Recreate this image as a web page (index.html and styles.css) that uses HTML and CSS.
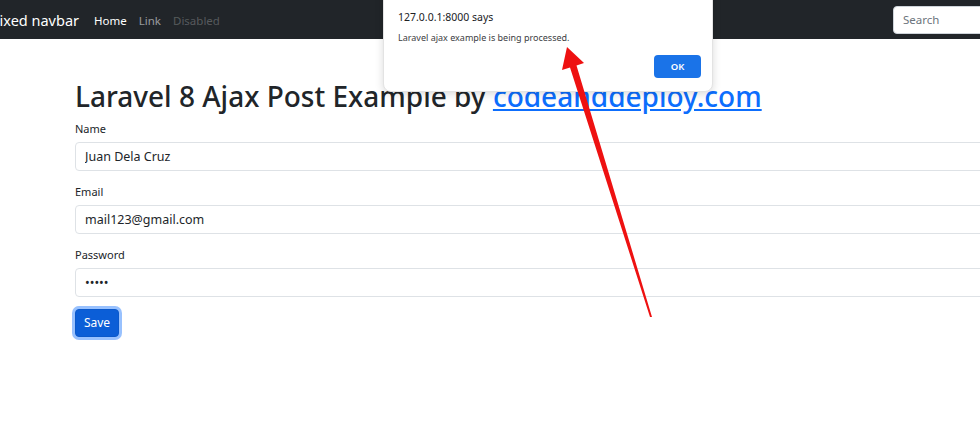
FILE: index.html
```html
<!DOCTYPE html>
<html>
<head>
    <title>Laravel 8 Ajax Post Example</title>
    <link rel="stylesheet" href="styles.css">
</head>
<body>
    <nav class="navbar">
        <a class="brand" href="#">Fixed navbar</a>
        <ul class="nav-links">
            <li><a class="active" href="#">Home</a></li>
            <li><a href="#">Link</a></li>
            <li><a class="disabled">Disabled</a></li>
        </ul>
        <input class="search" type="search" placeholder="Search">
    </nav>

    <div class="container">
        <h1>Laravel 8 Ajax Post Example by <a href="#">codeanddeploy.com</a></h1>
        <form id="form">
            <div class="field">
                <label for="name">Name</label>
                <input type="text" id="name" value="Juan Dela Cruz">
            </div>
            <div class="field">
                <label for="email">Email</label>
                <input type="text" id="email" value="mail123@gmail.com">
            </div>
            <div class="field">
                <label for="password">Password</label>
                <input type="password" id="password" value="12345">
            </div>
            <button type="button" class="btn-save">Save</button>
        </form>
    </div>

    <!-- alert box del navegador -->
    <div class="alert-box">
        <div class="alert-title">127.0.0.1:8000 says</div>
        <div class="alert-msg">Laravel ajax example is being processed.</div>
        <div class="alert-actions">
            <button type="button" class="btn-ok">OK</button>
        </div>
    </div>

    <svg class="arrow" width="980" height="422" viewBox="0 0 980 422">
        <polygon points="567,47 584,63 576.5,65.5 652,317 650,317 570,67.5 562,70" fill="#ee1111"/>
    </svg>
</body>
</html>
```

FILE: styles.css
```css
body {
    margin: 0;
    font-family: "Noto Sans", "Open Sans", sans-serif;
    color: #212529;
    background-color: #fff;
    width: 980px;
    height: 422px;
    overflow: hidden;
    position: relative;
}

.navbar {
    height: 39px;
    background-color: #212529;
    display: flex;
    align-items: center;
}

.brand {
    color: #fff;
    text-decoration: none;
    font-size: 14.5px;
    margin-left: -8px;
    margin-right: 15px;
}

.nav-links {
    display: flex;
    gap: 12px;
    list-style: none;
    margin: -2px 0 0 0;
    padding: 0;
}

.nav-links a {
    font-size: 11.5px;
    text-decoration: none;
    color: rgba(255, 255, 255, 0.55);
}

.nav-links a.active {
    color: #fff;
}

.nav-links a.disabled {
    color: rgba(255, 255, 255, 0.25);
}

.search {
    margin-left: auto;
    margin-right: -30px;
    width: 117px;
    height: 28px;
    box-sizing: border-box;
    border: 1px solid #ced4da;
    border-radius: 4px;
    padding: 0 9px;
    font-family: inherit;
    font-size: 11.5px;
}

.search::placeholder {
    color: #6c757d;
}

.container {
    padding-left: 75px;
}

h1 {
    font-size: 28px;
    font-weight: 500;
    margin: 41px 0 7px 0;
    line-height: 1.2;
    white-space: nowrap;
}

h1 a {
    color: #0d6efd;
}

.field {
    margin-bottom: 13px;
}

.field label {
    display: block;
    font-size: 11px;
    margin-bottom: 6px;
}

.field input {
    display: block;
    width: 930px;
    height: 29px;
    box-sizing: border-box;
    border: 1px solid #dee2e6;
    border-radius: 4px;
    padding: 0 9px;
    font-family: inherit;
    font-size: 12.5px;
    color: #212529;
}

.btn-save {
    display: block;
    margin-top: -1px;
    background-color: #0b5ed7;
    color: #fff;
    border: 1px solid #0a58ca;
    border-radius: 4px;
    height: 28px;
    width: 44px;
    padding: 0;
    font-family: inherit;
    font-size: 12px;
    box-shadow: 0 0 0 3px rgba(49, 132, 253, 0.5);
}

.alert-box {
    position: absolute;
    left: 383px;
    top: -10px;
    width: 330px;
    height: 102px;
    box-sizing: border-box;
    background-color: #fff;
    border: 1px solid #e3e3e3;
    border-radius: 8px;
    box-shadow: 0 2px 8px rgba(0, 0, 0, 0.15);
    padding: 17px 11px 0 14px;
}

.alert-title {
    font-size: 10.5px;
    color: #202124;
    line-height: 18px;
}

.alert-msg {
    font-size: 9px;
    color: #3c4043;
    margin-top: 5px;
}

.alert-actions {
    display: flex;
    justify-content: flex-end;
    margin-top: 11px;
}

.btn-ok {
    background-color: #1a73e8;
    color: #fff;
    border: none;
    border-radius: 4px;
    width: 47px;
    height: 23px;
    font-family: inherit;
    font-size: 9.5px;
    font-weight: 600;
}

.arrow {
    position: absolute;
    left: 0;
    top: 0;
    pointer-events: none;
}
```
